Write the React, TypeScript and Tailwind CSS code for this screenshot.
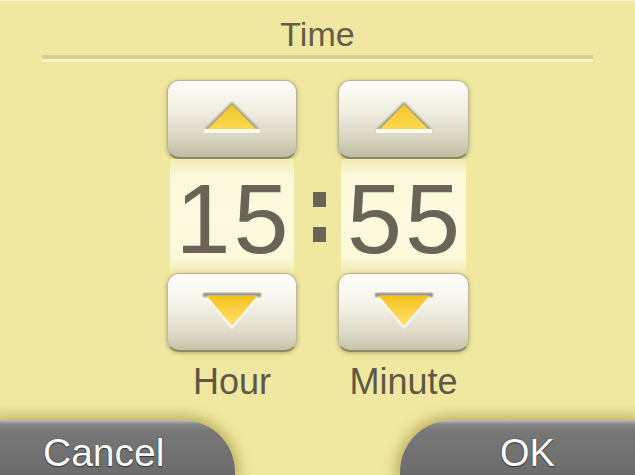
import React from 'react';

const font = "font-['Liberation_Sans',Arial,sans-serif]";

const UpArrow: React.FC = () => (
  <svg width="60" height="34" viewBox="0 0 60 34">
    <defs>
      <linearGradient id="upFill" x1="0" y1="0" x2="0" y2="1">
        <stop offset="0" stopColor="#f3c52c" />
        <stop offset="1" stopColor="#fcd94e" />
      </linearGradient>
      <filter id="soft" x="-20%" y="-20%" width="140%" height="140%">
        <feGaussianBlur stdDeviation="0.9" />
      </filter>
    </defs>
    <polygon points="30,1 2,29 58,29" fill="#9d9677" filter="url(#soft)" />
    <polygon points="30,3.5 6,28 54,28" fill="url(#upFill)" />
    <rect x="2" y="28" width="56" height="4" rx="1" fill="#fbf9ee" />
  </svg>
);

const DownArrow: React.FC = () => (
  <svg width="60" height="38" viewBox="0 0 60 38">
    <defs>
      <linearGradient id="downFill" x1="0" y1="0" x2="0" y2="1">
        <stop offset="0" stopColor="#f6c21c" />
        <stop offset="1" stopColor="#fde373" />
      </linearGradient>
      <filter id="soft2" x="-20%" y="-20%" width="140%" height="140%">
        <feGaussianBlur stdDeviation="0.9" />
      </filter>
    </defs>
    <rect x="1" y="1" width="58" height="4" rx="1" fill="#8a846c" filter="url(#soft2)" />
    <polygon points="4,4 56,4 30,37" fill="#fffef8" filter="url(#soft2)" />
    <polygon points="5,4 55,4 30,34" fill="url(#downFill)" />
  </svg>
);

const Spinner: React.FC<{ value: string; label: string; width: string }> = ({ value, label, width }) => (
  <div className={`flex flex-col items-center ${width}`}>
    <button className="w-full h-[79px] rounded-[12px] flex justify-center pt-[20px] bg-[linear-gradient(to_bottom,#fefdf8_0%,#f1eee2_40%,#d8d4bf_75%,#c0bca1_100%)] border border-[#b9b494] border-b-[2px] border-b-[#8c8664] shadow-[0_1px_4px_rgba(110,100,40,0.45)]">
      <UpArrow />
    </button>
    <div className="w-[calc(100%-6px)] h-[114px] bg-[linear-gradient(to_bottom,#f3ebb0_0%,#fcf8da_14%,#fdfadf_50%,#fcf8da_86%,#f3ebb0_100%)] flex justify-center pt-[10px]">
      <span className="text-[99px] leading-none text-[#6b6356] tracking-[3px] pl-[3px]">{value}</span>
    </div>
    <button className="w-full h-[79px] rounded-[12px] flex justify-center pt-[18px] bg-[linear-gradient(to_bottom,#fffefa_0%,#f7f5ec_35%,#e0dccb_75%,#c6c2a8_100%)] border border-[#bdb898] border-b-[2px] border-b-[#8c8664] shadow-[0_1px_4px_rgba(110,100,40,0.45)]">
      <DownArrow />
    </button>
    <div className="mt-[12px] text-[36px] leading-none text-[#5f5844]">{label}</div>
  </div>
);

const App: React.FC = () => {
  return (
    <div className={`w-[635px] h-[475px] overflow-hidden bg-[#f0e8a0] border-t border-[#f5f1dc] flex flex-col ${font}`}>
      <div className="mt-[16px] text-center text-[34px] leading-none text-[#655d48]">Time</div>
      <div className="mx-[42px] mt-[4px] mb-[18px]">
        <div className="h-[4px] bg-[#d9d18e]" />
        <div className="h-[3px] bg-[#fbf4c8]" />
      </div>

      <div className="flex justify-center pl-[1px]">
        <Spinner value="15" label="Hour" width="w-[130px]" />
        <div className="w-[41px] flex flex-col items-center pt-[112px] gap-[20px]">
          <div className="w-[13px] h-[15px] bg-[#6b6356] ml-[4px]" />
          <div className="w-[13px] h-[15px] bg-[#6b6356] ml-[4px]" />
        </div>
        <Spinner value="55" label="Minute" width="w-[131px]" />
      </div>

      <div className="mt-auto flex justify-between">
        <button className="w-[235px] h-[55px] rounded-tr-[52px] bg-[linear-gradient(to_bottom,#bdbdbd_0px,#8a8a8a_4px,#777777_10px,#6c6c6c_100%)] shadow-[0_0_12px_5px_rgba(150,130,40,0.5)] text-left pl-[43px] pt-[11px]">
          <span className="text-[39px] leading-none text-white [text-shadow:0_0_1px_#222,0_1px_1px_#333]">Cancel</span>
        </button>
        <button className="w-[235px] h-[55px] rounded-tl-[52px] bg-[linear-gradient(to_bottom,#bdbdbd_0px,#8a8a8a_4px,#777777_10px,#6c6c6c_100%)] shadow-[0_0_12px_5px_rgba(150,130,40,0.5)] text-left pl-[100px] pt-[11px]">
          <span className="text-[38px] leading-none text-white [text-shadow:0_0_1px_#222,0_1px_1px_#333]">OK</span>
        </button>
      </div>
    </div>
  );
};

export default App;
